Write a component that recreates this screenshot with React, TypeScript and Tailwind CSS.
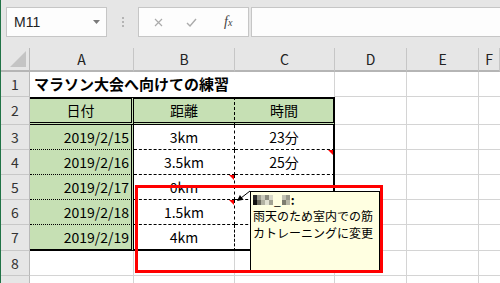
import React from "react";

const grid = "border-r border-b border-[#d4d4d4]";
const rowHdr =
  "flex items-center justify-center border-r border-b border-r-[#b9b9b9] border-b-[#c8c8c8] bg-[#e6e6e6] text-[14px] text-[#333]";
const colHdr =
  "flex items-center justify-center border-r border-b-2 border-r-[#c6c6c6] border-b-[#b5b5b5] bg-[#e6e6e6] text-[14px] text-[#222]";

const rows = [
  { date: "2019/2/15", km: "3km", time: "23分", markB: false, markC: false },
  { date: "2019/2/16", km: "3.5km", time: "25分", markB: false, markC: true },
  { date: "2019/2/17", km: "0km", time: "", markB: true, markC: false },
  { date: "2019/2/18", km: "1.5km", time: "", markB: true, markC: false },
  { date: "2019/2/19", km: "4km", time: "", markB: false, markC: false },
];

function Mark() {
  return (
    <span className="absolute right-0 top-0 h-0 w-0 border-l-[5px] border-t-[5px] border-l-transparent border-t-[#ff0000]" />
  );
}

function Filler() {
  return (
    <>
      <div className={grid} />
      <div className={grid} />
      <div className="border-b border-[#d4d4d4]" />
    </>
  );
}

export default function App() {
  return (
    <div className="relative h-[283px] w-[500px] overflow-hidden border-l border-[#217346] bg-[#e6e6e6] font-['Noto_Sans_CJK_JP',sans-serif] text-black">
      {/* formula bar */}
      <div className="flex h-[48px] items-start pt-[7px]">
        <div className="ml-[5px] flex h-[30px] w-[101px] items-center justify-between border border-[#c6c6c6] bg-[#fdfdfd] pl-[7px] pr-[6px]">
          <span className="font-['Liberation_Sans',sans-serif] text-[14px] text-[#222]">M11</span>
          <svg width="7" height="4" viewBox="0 0 7 4">
            <polygon points="0,0 7,0 3.5,4" fill="#7a7a7a" />
          </svg>
        </div>
        <div className="ml-[15px] flex h-[30px] w-[2px] flex-col items-center justify-center gap-[2px]">
          <span className="h-[2px] w-[2px] bg-[#b4b4b4]" />
          <span className="h-[2px] w-[2px] bg-[#b4b4b4]" />
          <span className="h-[2px] w-[2px] bg-[#b4b4b4]" />
        </div>
        <div className="ml-[14px] flex h-[30px] w-[111px] items-center border border-[#c6c6c6] bg-[#fdfdfd] pl-[15px]">
          <svg width="9" height="9" viewBox="0 0 9 9">
            <path d="M1 1L8 8M8 1L1 8" stroke="#ababab" strokeWidth="1.2" fill="none" />
          </svg>
          <svg className="ml-[23px]" width="11" height="9" viewBox="0 0 11 9">
            <path d="M1 5L4 8L10 1" stroke="#ababab" strokeWidth="1.4" fill="none" />
          </svg>
          <span className="ml-[27px] font-['Liberation_Serif',serif] text-[14px] italic leading-none text-[#444]">
            f<span className="text-[10px]">x</span>
          </span>
        </div>
        <div className="ml-[2px] h-[30px] flex-1 border border-r-0 border-[#c6c6c6] bg-[#fdfdfd]" />
      </div>

      {/* sheet */}
      <div className="grid grid-cols-[29px_104px_101px_100px_72px_72px_1fr] grid-rows-[24px_25px_28px_25px_25px_25px_25px_26px_25px_25px] bg-white">
        {/* column headers */}
        <div className="flex items-end justify-end border-r border-b-2 border-r-[#b9b9b9] border-b-[#b5b5b5] bg-[#e6e6e6] pb-[3px] pr-[3px]">
          <svg width="16" height="16" viewBox="0 0 16 16">
            <polygon points="16,0 16,16 0,16" fill="#c4c4c4" />
          </svg>
        </div>
        {["A", "B", "C", "D", "E", "F"].map((c) => (
          <div key={c} className={colHdr}>
            {c}
          </div>
        ))}

        {/* row 1 */}
        <div className={rowHdr}>1</div>
        <div className="flex items-center whitespace-nowrap pl-[4px] text-[15px] font-bold">
          マラソン大会へ向けての練習
        </div>
        <div />
        <div className="border-r border-[#d4d4d4]" />
        <Filler />

        {/* row 2 */}
        <div className={rowHdr}>2</div>
        <div className="flex items-center justify-center border-t-2 border-r-[3px] border-b-[3px] border-black bg-[#c6e0b4] text-[14px] [border-bottom-style:double] [border-right-style:double]">
          日付
        </div>
        <div className="flex items-center justify-center border-t-2 border-r border-b-[3px] border-black bg-[#c6e0b4] text-[14px] [border-bottom-style:double] [border-right-style:dashed]">
          距離
        </div>
        <div className="flex items-center justify-center border-t-2 border-r-2 border-b-[3px] border-black bg-[#c6e0b4] text-[14px] [border-bottom-style:double]">
          時間
        </div>
        <Filler />

        {/* rows 3-7 */}
        {rows.map((r, i) => {
          const last = i === rows.length - 1;
          return (
            <React.Fragment key={r.date}>
              <div className={rowHdr}>{i + 3}</div>
              <div
                className={
                  "flex items-center justify-end border-r-[3px] border-black bg-[#c6e0b4] pr-[2px] text-[14px] [border-right-style:double] " +
                  (last ? "border-b-2" : "border-b [border-bottom-style:dotted]")
                }
              >
                {r.date}
              </div>
              <div
                className={
                  "relative flex items-center justify-center border-r border-black text-[14px] [border-right-style:dashed] " +
                  (last ? "border-b-2" : "border-b [border-bottom-style:dashed]")
                }
              >
                {r.km}
                {r.markB && <Mark />}
              </div>
              <div
                className={
                  "relative flex items-center justify-center border-r-2 border-black text-[14px] " +
                  (last ? "border-b-2" : "border-b [border-bottom-style:dashed]")
                }
              >
                {r.time}
                {r.markC && <Mark />}
              </div>
              <Filler />
            </React.Fragment>
          );
        })}

        {/* rows 8-9 */}
        {["8", ""].map((n, i) => (
          <React.Fragment key={i}>
            <div className={rowHdr}>{n}</div>
            <div className={grid} />
            <div className={grid} />
            <div className={grid} />
            <Filler />
          </React.Fragment>
        ))}
      </div>

      {/* comment */}
      <svg className="pointer-events-none absolute left-0 top-0 z-10" width="500" height="283">
        <line x1="249" y1="191" x2="240" y2="198" stroke="#000" strokeWidth="1" />
        <polygon points="236,201 242.6,199.7 238.9,195" fill="#000" />
      </svg>
      <div className="absolute left-[249px] top-[191px] z-10 h-[80px] w-[130px] border border-black bg-[#ffffe1] px-[2px] pt-[1px] text-[12px] leading-[17px] text-black">
        <div className="flex h-[14px] items-center">
          <div className="grid grid-cols-[repeat(5,4px)] grid-rows-[5px_5px]">
            <span className="bg-[#2b2b2b]" />
            <span className="bg-[#9c9c8e]" />
            <span className="bg-[#c9c9b9]" />
            <span className="bg-[#8d8d7f]" />
            <span className="bg-[#d8d8c8]" />
            <span className="bg-[#111111]" />
            <span className="bg-[#6b6b5e]" />
            <span className="bg-[#b2b2a2]" />
            <span className="bg-[#e2e2d2]" />
            <span className="bg-[#a3a393]" />
          </div>
          <span className="ml-[1px] leading-none">_</span>
          <div className="ml-[1px] grid grid-cols-[repeat(2,4px)] grid-rows-[5px_5px]">
            <span className="bg-[#c2c2b2]" />
            <span className="bg-[#9a9a8c]" />
            <span className="bg-[#7d7d70]" />
            <span className="bg-[#b8b8a8]" />
          </div>
          <span className="ml-[1px] font-bold leading-none">:</span>
        </div>
        <div>雨天のため室内での筋</div>
        <div>カトレーニングに変更</div>
      </div>

      {/* red highlight frame */}
      <div className="pointer-events-none absolute left-[134px] top-[185px] z-20 h-[88px] w-[248px] border-[3px] border-[#ff0000]" />
    </div>
  );
}
